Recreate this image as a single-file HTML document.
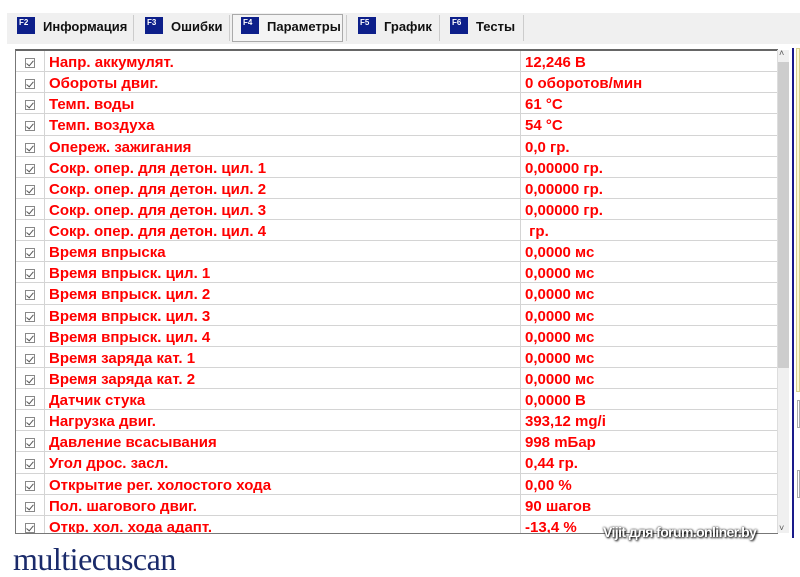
<!DOCTYPE html>
<html><head><meta charset="utf-8"><style>
*{margin:0;padding:0;box-sizing:border-box}
body{width:800px;height:556px;background:#fff;position:relative;overflow:hidden;font-family:"Liberation Sans",Arial,sans-serif}
.bar{position:absolute;left:7px;top:13px;width:793px;height:31px;background:#f0f0f0}
.tab{position:absolute;top:17px;height:24px;font-size:13px;font-weight:bold;color:#111;line-height:20px}
.ic{position:absolute;top:0;width:18px;height:17px;background:#0d1f8a;color:#fff;font-size:8px;line-height:12px;padding-left:2px;font-weight:bold}
.sep{position:absolute;top:15px;width:1px;height:26px;background:#ccc}
.act{position:absolute;left:232px;top:14px;width:111px;height:28px;border:1px solid #aaa;background:#f4f4f4}
.wrap{position:absolute;left:15px;top:49px;width:763px;height:485px;overflow:hidden;border:1px solid #777;border-top:2px solid #666}
.row{height:21.14px;display:flex;border-bottom:1px solid #d4d4d4;color:#f00;font-weight:bold;font-size:15px;line-height:21px;white-space:nowrap}
.row div{height:100%;padding-top:1px}
.c{width:29px;border-right:1px solid #d4d4d4;text-align:center}
.n{width:476px;border-right:1px solid #d4d4d4;padding-left:4px}
.v{padding-left:4px}
.cb{display:inline-block;width:10px;height:10px;border:1px solid #888;position:relative;top:1px}
.cb:after{content:"";position:absolute;left:2px;top:0px;width:3px;height:6px;border-right:1.5px solid #555;border-bottom:1.5px solid #555;transform:rotate(40deg)}
</style></head><body>
<div class="bar"></div>
<div class="act"></div>
<div class="tab" style="left:17px"><span class="ic">F2</span><span style="margin-left:26px">Информация</span></div>
<div class="sep" style="left:133px"></div>
<div class="tab" style="left:145px"><span class="ic">F3</span><span style="margin-left:26px">Ошибки</span></div>
<div class="sep" style="left:229px"></div>
<div class="tab" style="left:241px"><span class="ic">F4</span><span style="margin-left:26px">Параметры</span></div>
<div class="sep" style="left:346px"></div>
<div class="tab" style="left:358px"><span class="ic">F5</span><span style="margin-left:26px">График</span></div>
<div class="sep" style="left:439px"></div>
<div class="tab" style="left:450px"><span class="ic">F6</span><span style="margin-left:26px">Тесты</span></div>
<div class="sep" style="left:523px"></div>
<div class="wrap">
<div class="row"><div class="c"><span class="cb"></span></div><div class="n">Напр. аккумулят.</div><div class="v">12,246 В</div></div>
<div class="row"><div class="c"><span class="cb"></span></div><div class="n">Обороты двиг.</div><div class="v">0 оборотов/мин</div></div>
<div class="row"><div class="c"><span class="cb"></span></div><div class="n">Темп. воды</div><div class="v">61 °C</div></div>
<div class="row"><div class="c"><span class="cb"></span></div><div class="n">Темп. воздуха</div><div class="v">54 °C</div></div>
<div class="row"><div class="c"><span class="cb"></span></div><div class="n">Опереж. зажигания</div><div class="v">0,0 гр.</div></div>
<div class="row"><div class="c"><span class="cb"></span></div><div class="n">Сокр. опер. для детон. цил. 1</div><div class="v">0,00000 гр.</div></div>
<div class="row"><div class="c"><span class="cb"></span></div><div class="n">Сокр. опер. для детон. цил. 2</div><div class="v">0,00000 гр.</div></div>
<div class="row"><div class="c"><span class="cb"></span></div><div class="n">Сокр. опер. для детон. цил. 3</div><div class="v">0,00000 гр.</div></div>
<div class="row"><div class="c"><span class="cb"></span></div><div class="n">Сокр. опер. для детон. цил. 4</div><div class="v">&nbsp;гр.</div></div>
<div class="row"><div class="c"><span class="cb"></span></div><div class="n">Время впрыска</div><div class="v">0,0000 мс</div></div>
<div class="row"><div class="c"><span class="cb"></span></div><div class="n">Время впрыск. цил. 1</div><div class="v">0,0000 мс</div></div>
<div class="row"><div class="c"><span class="cb"></span></div><div class="n">Время впрыск. цил. 2</div><div class="v">0,0000 мс</div></div>
<div class="row"><div class="c"><span class="cb"></span></div><div class="n">Время впрыск. цил. 3</div><div class="v">0,0000 мс</div></div>
<div class="row"><div class="c"><span class="cb"></span></div><div class="n">Время впрыск. цил. 4</div><div class="v">0,0000 мс</div></div>
<div class="row"><div class="c"><span class="cb"></span></div><div class="n">Время заряда кат. 1</div><div class="v">0,0000 мс</div></div>
<div class="row"><div class="c"><span class="cb"></span></div><div class="n">Время заряда кат. 2</div><div class="v">0,0000 мс</div></div>
<div class="row"><div class="c"><span class="cb"></span></div><div class="n">Датчик стука</div><div class="v">0,0000 В</div></div>
<div class="row"><div class="c"><span class="cb"></span></div><div class="n">Нагрузка двиг.</div><div class="v">393,12 mg/i</div></div>
<div class="row"><div class="c"><span class="cb"></span></div><div class="n">Давление всасывания</div><div class="v">998 mБар</div></div>
<div class="row"><div class="c"><span class="cb"></span></div><div class="n">Угол дрос. засл.</div><div class="v">0,44 гр.</div></div>
<div class="row"><div class="c"><span class="cb"></span></div><div class="n">Открытие рег. холостого хода</div><div class="v">0,00 %</div></div>
<div class="row"><div class="c"><span class="cb"></span></div><div class="n">Пол. шагового двиг.</div><div class="v">90 шагов</div></div>
<div class="row"><div class="c"><span class="cb"></span></div><div class="n">Откр. хол. хода адапт.</div><div class="v">-13,4 %</div></div>
</div>
<div style="position:absolute;left:777px;top:50px;width:12px;height:483px;background:#f0f0f0;border-left:1px solid #ddd"></div>
<div style="position:absolute;left:778px;top:62px;width:11px;height:306px;background:#cdcdcd"></div>
<div style="position:absolute;left:779px;top:48px;font-size:9px;color:#555">&#708;</div>
<div style="position:absolute;left:779px;top:523px;font-size:9px;color:#555">&#709;</div>
<div style="position:absolute;left:792px;top:48px;width:2px;height:490px;background:#1a1a8a"></div>
<div style="position:absolute;left:796px;top:48px;width:4px;height:344px;background:#fffbd0;border:1px solid #d8d090"></div>
<div style="position:absolute;left:797px;top:400px;width:3px;height:28px;border:1px solid #aaa"></div>
<div style="position:absolute;left:797px;top:470px;width:3px;height:28px;border:1px solid #aaa"></div>
<div style="position:absolute;left:603px;top:524px;font-size:14px;font-weight:bold;color:#fff;text-shadow:0 0 2px #000,1px 1px 2px #000;letter-spacing:-0.6px">Vijit для forum.onliner.by</div>
<div style="position:absolute;left:13px;top:543px;font-family:'Liberation Serif',serif;font-size:32px;line-height:32px;color:#1a2a6a;letter-spacing:-0.5px">multiecuscan</div>
</body></html>
